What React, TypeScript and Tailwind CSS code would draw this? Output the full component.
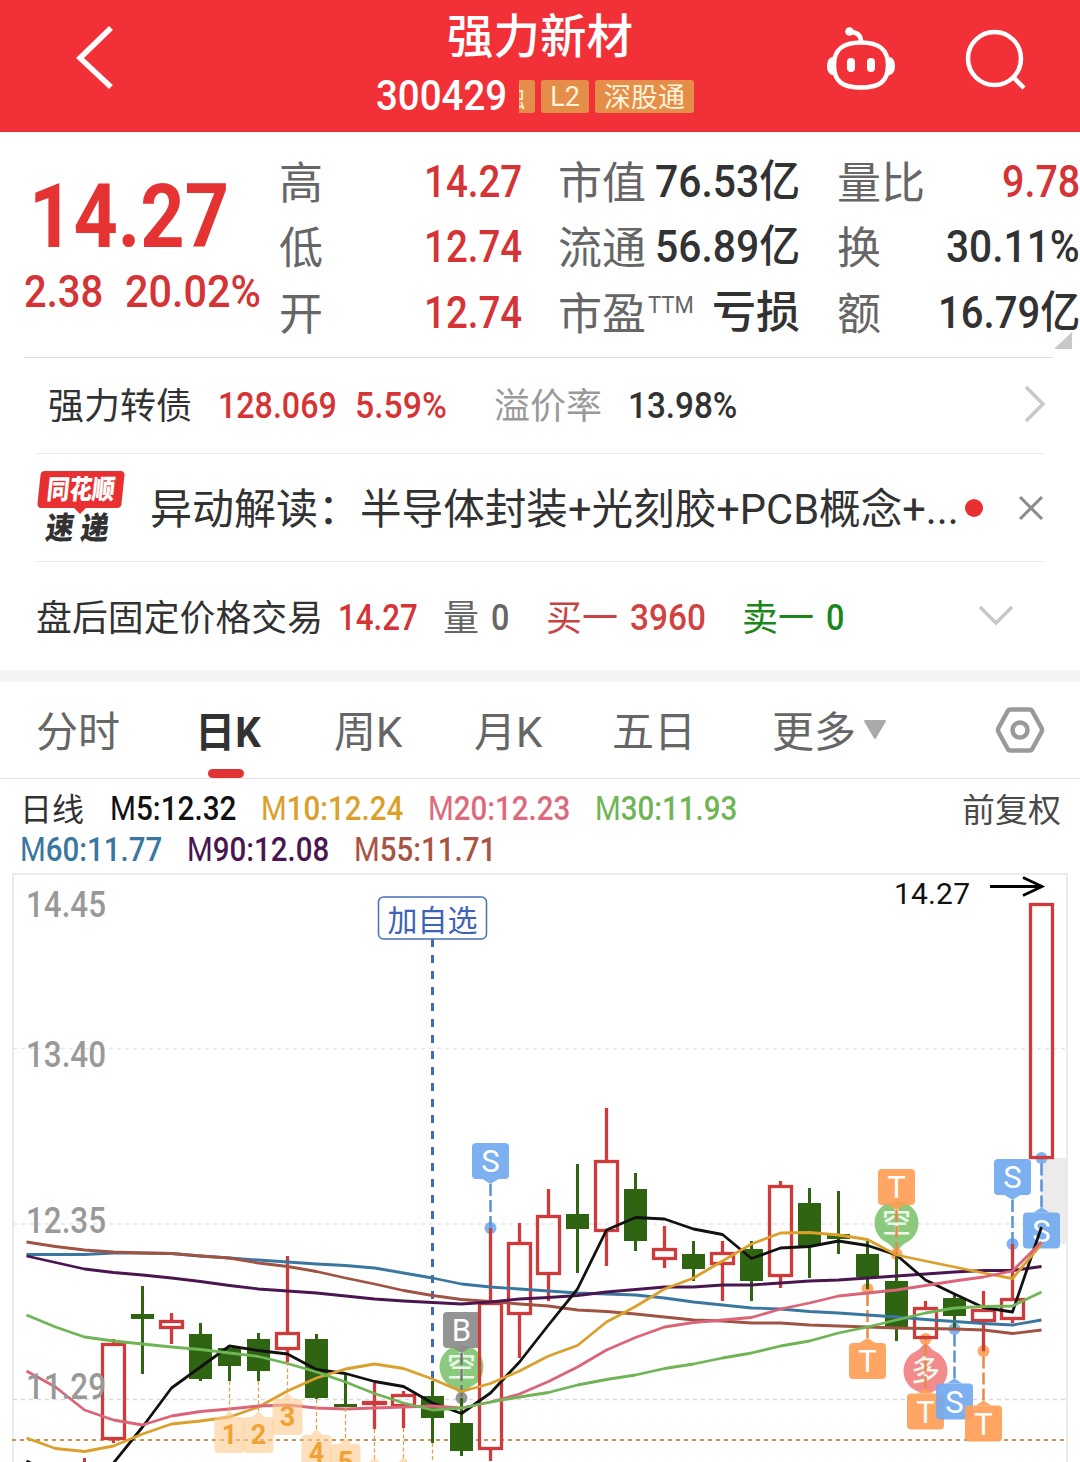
import { useLayoutEffect, useRef, useState, type ReactNode } from 'react';

type FitProps = { w: number; className?: string; children: ReactNode };

// Condenses a run of text horizontally so that it fills exactly w pixels
function Fit({ w, className = '', children }: FitProps) {
  const ref = useRef<HTMLSpanElement>(null);
  const [scale, setScale] = useState(1);

  useLayoutEffect(() => {
    if (ref.current) setScale(w / ref.current.offsetWidth);
  }, [w]);

  return (
    <span className={`inline-block shrink-0 whitespace-nowrap ${className}`} style={{ width: w }}>
      <span ref={ref} className="inline-block origin-left" style={{ transform: `scaleX(${scale})` }}>
        {children}
      </span>
    </span>
  );
}

function Header() {
  return (
    <header className="flex h-[132px] border-b border-[#d8303c] bg-[#f23038] text-white">
      <div className="w-[375px] pl-[76px] pt-[25px]">
        <svg width="38" height="66" viewBox="0 0 38 66" fill="none" stroke="#fff" strokeWidth="5.5">
          <path d="M35 3 L4 33 L35 62" />
        </svg>
      </div>
      <div className="flex w-[330px] flex-col">
        <h1 className="mt-[6px] text-center text-[46.5px] leading-[62px] font-medium">强力新材</h1>
        <div className="mt-[8px] flex h-[40px] items-center">
          <Fit w={131} className="ml-[1px] text-[42px] leading-[42px] font-medium">300429</Fit>
          <div className="ml-[12px] flex h-[33px] w-[16px] justify-end overflow-hidden rounded-r-[3px] bg-[#e58e49] pr-[10px] text-[26px] leading-[36px] text-[#fff3d8]">
            融
          </div>
          <div className="ml-[6px] h-[33px] w-[48px] rounded-[3px] bg-[#e58e49] text-center text-[27px] leading-[34px] text-[#fff3d8]">
            L2
          </div>
          <div className="ml-[6px] h-[33px] w-[99px] rounded-[3px] bg-[#e58e49] text-center text-[27px] leading-[36px] text-[#fff3d8]">
            深股通
          </div>
        </div>
      </div>
      <div className="flex pt-[26px] pl-[121px]">
        <svg width="70" height="66" viewBox="826 26 70 66" fill="none" stroke="#fff" strokeWidth="4.5">
          <path d="M861 42.500 C879 42.500 888 49 888 65 C888 82 879 87.500 861 87.500 C843 87.500 834 82 834 65 C834 49 843 42.500 861 42.500 Z" />
          <path d="M861 42 C861 35 857 32 850 32" />
          <circle cx="849.500" cy="31.500" r="4.300" fill="#fff" stroke="none" />
          <path d="M833 57.500 C826 59 826 73 833 74.500 Z M889 57.500 C896 59 896 73 889 74.500 Z" fill="#fff" strokeWidth="1.500" />
          <rect x="847" y="58" width="8" height="14" rx="4" fill="#fff" stroke="none" />
          <rect x="867" y="58" width="8" height="14" rx="4" fill="#fff" stroke="none" />
        </svg>
        <svg className="ml-[69px]" width="62" height="66" viewBox="965 26 62 66" fill="none" stroke="#fff" strokeWidth="4.500">
          <circle cx="994.500" cy="58.500" r="26.500" />
          <path d="M1013 77 L1024 88" />
        </svg>
      </div>
    </header>
  );
}

type Cell = { label: string; value: string; w: number; color: string; sup?: string };

const columns: { className: string; cells: Cell[] }[] = [
  {
    className: 'w-[243px]',
    cells: [
      { label: '高', value: '14.27', w: 98, color: 'text-[#d53436]' },
      { label: '低', value: '12.74', w: 98, color: 'text-[#d53436]' },
      { label: '开', value: '12.74', w: 98, color: 'text-[#d53436]' },
    ],
  },
  {
    className: 'ml-[36px] w-[242px]',
    cells: [
      { label: '市值', value: '76.53亿', w: 145, color: 'text-[#323232]' },
      { label: '流通', value: '56.89亿', w: 145, color: 'text-[#323232]' },
      { label: '市盈', value: '亏损', w: 88, color: 'text-[#323232]', sup: 'TTM' },
    ],
  },
  {
    className: 'ml-[37px] w-[243px]',
    cells: [
      { label: '量比', value: '9.78', w: 78, color: 'text-[#d53436]' },
      { label: '换', value: '30.11%', w: 134, color: 'text-[#323232]' },
      { label: '额', value: '16.79亿', w: 142, color: 'text-[#323232]' },
    ],
  },
];

function Quote() {
  return (
    <section className="relative flex h-[225px]">
      <div className="w-[279px] text-[#e53232]">
        <Fit w={200} className="mt-[40px] ml-[29px] block text-[89px] leading-[90px] font-bold">14.27</Fit>
        <div className="mt-[3px] ml-[24px] flex text-[45px] leading-[54px] font-medium text-[#d53436]">
          <Fit w={79}>2.38</Fit>
          <Fit w={136} className="ml-[22px]">20.02%</Fit>
        </div>
      </div>
      {columns.map((col, i) => (
        <div key={i} className={`shrink-0 pt-[17px] ${col.className}`}>
          {col.cells.map((cell) => (
            <div key={cell.label} className="flex h-[65.5px] items-center justify-between text-[44px] leading-[60px]">
              <span className="flex pt-[4px] text-[#666]">
                {cell.label}
                {cell.sup && <Fit w={46} className="-mt-[10px] ml-[2px] text-[24px]">{cell.sup}</Fit>}
              </span>
              <Fit w={cell.w} className={`font-medium ${cell.color}`}>{cell.value}</Fit>
            </div>
          ))}
        </div>
      ))}
      <svg className="absolute top-[200px] left-[1054px]" width="18" height="17">
        <path d="M18 0 V17 H0 Z" fill="#c8c8c8" />
      </svg>
    </section>
  );
}

function BondRow() {
  return (
    <div className="mr-[27px] ml-[24px] flex h-[96px] items-center border-t border-[#dcdcdc] pl-[24px] text-[36px] leading-[50px]">
      <span className="w-[144px] pt-[3px] text-[#323232]">强力转债</span>
      <Fit w={119} className="ml-[26px] font-medium text-[#d53436]">128.069</Fit>
      <Fit w={92} className="ml-[18px] font-medium text-[#d53436]">5.59%</Fit>
      <span className="ml-[47px] pt-[3px] text-[#999]">溢价率</span>
      <Fit w={109} className="ml-[26px] font-medium text-[#323232]">13.98%</Fit>
      <svg className="mr-[7px] mb-[4px] ml-auto" width="22" height="38" fill="none" stroke="#c8c8c8" strokeWidth="3.500">
        <path d="M2 2 L19 19 L2 36" />
      </svg>
    </div>
  );
}

function NewsRow() {
  return (
    <div className="mx-[36px] flex h-[108px] border-t border-[#e9e9e9]">
      <div className="relative w-[90px] pt-[17px]">
        <div className="ml-[3px] h-[37px] w-[84px] -skew-x-6 rounded-[4px] bg-[#e83033] text-center">
          <Fit w={68} className="text-[27px] leading-[39px] font-black text-white">同花顺</Fit>
        </div>
        <svg className="absolute top-[53px] left-[37px]" width="14" height="8">
          <path d="M0 0 H14 L7 7 Z" fill="#e83033" />
        </svg>
        <div className="mt-[5px] ml-[10px] flex -skew-x-8 gap-[7px] text-[31px] leading-[32px] font-black text-[#323232]">
          <Fit w={28}>速</Fit>
          <Fit w={28}>递</Fit>
        </div>
      </div>
      <div className="ml-[25px] flex h-[107px] items-center text-[42px] text-[#323232]">
        <span className="w-[210px] pt-[4px]">异动解读：</span>
        <Fit w={599} className="pt-[4px]">半导体封装+光刻胶+PCB概念+...</Fit>
        <span className="ml-[6px] size-[18px] rounded-full bg-[#e83033]" />
        <svg className="ml-[35px]" width="26" height="26" stroke="#8c8c8c" strokeWidth="3">
          <path d="M2 2 L24 24 M24 2 L2 24" />
        </svg>
      </div>
    </div>
  );
}

function AfterHoursRow() {
  return (
    <div className="mx-[36px] flex h-[109px] items-center border-t border-[#e9e9e9] text-[36px] leading-[50px]">
      <Fit w={287} className="pt-[6px] text-[#323232]">盘后固定价格交易</Fit>
      <Fit w={80} className="ml-[15px] pt-[4px] font-medium text-[#d53436]">14.27</Fit>
      <span className="ml-[25px] pt-[6px] text-[#666]">量</span>
      <Fit w={18} className="ml-[12px] pt-[4px] font-medium text-[#666]">0</Fit>
      <span className="ml-[37px] pt-[6px] text-[#c94343]">买一</span>
      <Fit w={76} className="ml-[12px] pt-[4px] font-medium text-[#d04343]">3960</Fit>
      <span className="ml-[36px] pt-[6px] text-[#1c861c]">卖一</span>
      <Fit w={18} className="ml-[12px] pt-[4px] font-medium text-[#1c861c]">0</Fit>
      <svg className="ml-auto mr-[30px]" width="36" height="22" fill="none" stroke="#c8c8c8" strokeWidth="3.500">
        <path d="M2 2 L18 18 L34 2" />
      </svg>
    </div>
  );
}

function Tabs() {
  return (
    <nav className="flex h-[97px] items-center border-b border-[#e2e2e2] px-[36px] text-[42px] leading-[60px] text-[#666]">
      <Fit w={84} className="pt-[5px]">分时</Fit>
      <div className="relative ml-[75px] font-bold text-[#323232]">
        <Fit w={66} className="pt-[5px]">日K</Fit>
        <span className="absolute -bottom-[15px] left-[13px] h-[9px] w-[36px] rounded-full bg-[#e03434]" />
      </div>
      <Fit w={68} className="ml-[73px] pt-[5px]">周K</Fit>
      <Fit w={68} className="ml-[72px] pt-[5px]">月K</Fit>
      <Fit w={84} className="ml-[70px] pt-[5px]">五日</Fit>
      <Fit w={84} className="ml-[76px] pt-[5px]">更多</Fit>
      <svg className="ml-[7px]" width="24" height="20">
        <path d="M2 1 H22 L12 18 Z" fill="#a9a9a9" stroke="#a9a9a9" strokeWidth="2" strokeLinejoin="round" />
      </svg>
      <svg className="-mr-px ml-auto" width="50" height="48" viewBox="0 0 50 48" fill="none" stroke="#999" strokeWidth="4.500" strokeLinejoin="round">
        <path d="M15.500 3.500 H34.500 Q36.500 3.500 37.500 5.500 L46.500 22 Q47.500 24 46.500 26 L37.500 42.500 Q36.500 44.500 34.500 44.500 H15.500 Q13.500 44.500 12.500 42.500 L3.500 26 Q2.500 24 3.500 22 L12.500 5.500 Q13.500 3.500 15.500 3.500 Z" />
        <circle cx="25" cy="24" r="7.500" />
      </svg>
    </nav>
  );
}

function Average({ name, value, w, className }: { name: string; value: string; w: number; className: string }) {
  return (
    <Fit w={w} className={className}>
      {name.slice(0, 1)}
      <span className="font-medium">{name.slice(1)}:{value}</span>
    </Fit>
  );
}

function Legend() {
  return (
    <div className="h-[93px] pt-[9px] pr-[19px] pl-[20px] text-[33px] leading-[41px]">
      <div className="flex gap-[25px]">
        <span className="w-[65px] pt-[2px] text-[32px] text-[#323232]">日线</span>
        <Average name="M5" value="12.32" w={126} className="text-[#111]" />
        <Average name="M10" value="12.24" w={142} className="text-[#dba02c]" />
        <Average name="M20" value="12.23" w={142} className="text-[#dc6a7c]" />
        <Average name="M30" value="11.93" w={142} className="text-[#6fb556]" />
        <span className="ml-auto pt-[2px] text-[#4a4a4a]">前复权</span>
      </div>
      <div className="-mt-[2px] flex gap-[25px]">
        <Average name="M60" value="11.77" w={142} className="text-[#3a77a0]" />
        <Average name="M90" value="12.08" w={142} className="text-[#4a1650]" />
        <Average name="M55" value="11.71" w={142} className="text-[#a95443]" />
      </div>
    </div>
  );
}

const STEP = 29;
const cx = (i: number) => 113.5 + STEP * i;

// [up, high, low, body top, body bottom]
const candles: [boolean, number, number, number, number][] = [
  [true, 1339, 1443, 1343, 1440],
  [false, 1286, 1374, 1314, 1319],
  [true, 1313, 1344, 1320, 1329],
  [false, 1323, 1381, 1334, 1379],
  [false, 1348, 1381, 1348, 1366],
  [false, 1333, 1381, 1339, 1371],
  [true, 1256, 1362, 1332, 1350],
  [false, 1334, 1399, 1339, 1398],
  [false, 1375, 1407, 1404, 1407],
  [true, 1383, 1429, 1401, 1405],
  [true, 1391, 1428, 1394, 1407],
  [false, 1381, 1443, 1396, 1418],
  [false, 1398, 1456, 1423, 1451],
  [true, 1228, 1461, 1302, 1450],
  [true, 1223, 1358, 1242, 1315],
  [true, 1189, 1301, 1215, 1275],
  [false, 1164, 1273, 1214, 1229],
  [true, 1108, 1266, 1160, 1232],
  [false, 1173, 1251, 1189, 1241],
  [true, 1226, 1268, 1248, 1260],
  [false, 1241, 1281, 1254, 1269],
  [true, 1241, 1301, 1252, 1265],
  [false, 1241, 1301, 1249, 1281],
  [true, 1181, 1288, 1185, 1277],
  [false, 1188, 1278, 1203, 1246],
  [false, 1191, 1254, 1234, 1239],
  [false, 1241, 1289, 1254, 1277],
  [false, 1255, 1341, 1281, 1327],
  [true, 1301, 1339, 1307, 1339],
  [false, 1295, 1329, 1298, 1316],
  [true, 1291, 1351, 1309, 1322],
  [true, 1244, 1323, 1298, 1320],
  [true, 903, 1159, 903, 1159],
];

// Every series starts three bars left of the first full candle
const averages: { color: string; ys: number[] }[] = [
  {
    color: '#3a77a0',
    ys: [1254.5, 1254.5, 1254.5, 1253, 1253, 1253.5, 1256, 1258, 1260, 1262, 1264, 1265.5, 1268, 1273, 1278, 1284, 1287, 1289, 1291, 1293, 1294, 1295, 1298, 1302, 1305, 1308, 1309, 1311.5, 1313, 1315, 1317, 1319.5, 1321.5, 1323.5, 1325, 1320],
  },
  {
    color: '#a05243',
    ys: [1242, 1246.5, 1250, 1252, 1253, 1253.5, 1256, 1258, 1263, 1266.5, 1271.5, 1278, 1284, 1290.5, 1295.5, 1299.5, 1301.5, 1304, 1306, 1310, 1311.5, 1314, 1317, 1320, 1321, 1323, 1323, 1325, 1326, 1327, 1328, 1328.5, 1329, 1330, 1333.5, 1330],
  },
  {
    color: '#4a1650',
    ys: [1256, 1262.5, 1269, 1272.5, 1275, 1278, 1281.5, 1285.5, 1289, 1291, 1293, 1296, 1299, 1301, 1302.5, 1304, 1302, 1299, 1297.5, 1295.5, 1292, 1289.5, 1287, 1287, 1285, 1285, 1283, 1281, 1280, 1278, 1276, 1274, 1272, 1270.5, 1270.5, 1266.5],
  },
  {
    color: '#111',
    ys: [1461, 1475, 1485, 1463, 1427, 1388, 1367, 1346, 1350.5, 1354, 1369.5, 1373.5, 1381.5, 1386.5, 1403, 1413.5, 1393, 1362, 1325, 1289, 1230, 1217.5, 1219, 1229, 1234.5, 1258.5, 1248, 1246.5, 1241, 1245.5, 1255, 1280, 1294, 1307.5, 1312, 1227],
  },
  {
    color: '#dba02c',
    ys: [1438, 1448.5, 1451.5, 1446, 1434, 1424, 1421, 1417, 1407, 1391, 1378, 1369, 1364, 1368.5, 1379, 1391.5, 1383.5, 1371, 1356, 1345.5, 1322, 1306.5, 1289, 1278, 1261, 1244, 1233, 1232.5, 1235, 1239.5, 1255, 1261, 1267, 1273, 1278.5, 1244],
  },
  {
    color: '#dc6478',
    ys: [1371, 1387, 1410, 1420, 1425, 1416, 1411.5, 1409, 1406, 1405, 1408, 1409, 1408, 1407, 1406, 1408, 1402, 1394, 1381.5, 1367, 1350, 1337.5, 1327, 1322.5, 1320, 1317.5, 1309, 1303, 1296, 1293, 1290, 1285.5, 1281, 1277, 1271, 1242],
  },
  {
    color: '#6fb556',
    ys: [1315, 1327, 1337, 1341, 1344, 1347, 1349.5, 1353, 1356.5, 1363.5, 1372, 1382, 1393.5, 1403, 1410, 1408, 1402, 1397, 1392.5, 1385, 1379.5, 1375, 1368.5, 1364, 1358, 1353, 1346, 1341, 1333, 1327, 1320, 1313, 1308, 1306.5, 1306, 1292],
  },
];

// bar index, letter, box top, anchor dot
type Mark = { i: number; text: string; top: number; dot: number; fill: string; dark: string };

const BLUE = { fill: '#72aaf0', dark: '#5b93d8' };
const ORANGE = { fill: '#ff9f57', dark: '#e8894a' };
const GRAY = { fill: '#8c8c8c', dark: '#777' };

const marks: Mark[] = [
  { i: 12, text: 'B', top: 1312, dot: 1398, ...GRAY },
  { i: 13, text: 'S', top: 1143, dot: 1228, ...BLUE },
  { i: 26, text: 'T', top: 1343, dot: 1289, ...ORANGE },
  { i: 27, text: 'T', top: 1169, dot: 1254, ...ORANGE },
  { i: 28, text: 'T', top: 1393.5, dot: 1339, ...ORANGE },
  { i: 29, text: 'S', top: 1383.5, dot: 1329, ...BLUE },
  { i: 30, text: 'T', top: 1405.5, dot: 1351, ...ORANGE },
  { i: 31, text: 'S', top: 1159, dot: 1244, ...BLUE },
  { i: 32, text: 'S', top: 1212.5, dot: 1158, ...BLUE },
];

function MarkPin({ i, text, top, dot, fill, dark }: Mark) {
  const x = cx(i);
  const below = top > dot;
  const edge = below ? top : top + 36;
  const tip = below ? edge - 5 : edge + 5;
  return (
    <g>
      <circle cx={x} cy={dot} r="6" fill={fill} opacity="0.9" />
      <path d={`M${x} ${tip} V${dot}`} stroke={dark} strokeWidth="2.500" strokeDasharray="12 4" />
      <g opacity="0.92">
        <rect x={x - 18.5} y={top} width="37" height="36" rx="4" fill={fill} />
        <path d={`M${x - 8} ${edge} L${x} ${tip} L${x + 8} ${edge} Z`} fill={fill} />
      </g>
      <text x={x} y={top + 29} fontSize="31" textAnchor="middle" fill="#fff">{text}</text>
    </g>
  );
}

function Bubble({ i, y, text, fill, tail }: { i: number; y: number; text: string; fill: string; tail: number }) {
  const x = cx(i);
  return (
    <g opacity="0.9">
      <circle cx={x} cy={y} r="22" fill={fill} />
      <path
        d={`M${x - 16} ${y + tail * 15} Q${x - 4} ${y + tail * 22} ${x} ${y + tail * 30} Q${x + 4} ${y + tail * 22} ${x + 16} ${y + tail * 15} Z`}
        fill={fill}
      />
      <text x={x} y={y + 10} fontSize="29" fontWeight="500" textAnchor="middle" fill="#e9f5e6">{text}</text>
    </g>
  );
}

const counts = [
  { i: 4, from: 1381, top: 1413 },
  { i: 5, from: 1381, top: 1413 },
  { i: 6, from: 1362, top: 1395 },
  { i: 7, from: 1399, top: 1431 },
  { i: 8, from: 1408, top: 1440 },
  { i: 9, from: 1429, top: 1459 },
  { i: 10, from: 1428, top: 1459 },
  { i: 11, from: 1443, top: 1475 },
];

const priceLabels = [
  { text: '14.45', y: 916.5 },
  { text: '13.40', y: 1066.5 },
  { text: '12.35', y: 1232.5 },
  { text: '11.29', y: 1399 },
];

function Chart() {
  return (
    <svg className="block" width="1080" height="590" viewBox="0 872 1080 590" fill="none">
      <path d="M13 1470 V874 H1067 V1470" stroke="#ebebeb" strokeWidth="2" />
      <path d="M13 1048.500 H1067 M13 1224 H1067" stroke="#e6e6e6" strokeWidth="1.500" strokeDasharray="4 4" />
      <path d="M13 1399.500 H1067" stroke="#d9d9d9" strokeWidth="1.500" strokeDasharray="4 4" />
      <rect x="1041" y="1158" width="27" height="86" fill="#ebebeb" />
      <path d="M12 1440 H1067" stroke="#cc9352" strokeWidth="2" strokeDasharray="4 4" />

      <path d="M432.500 939 V1381" stroke="#3f6abc" strokeWidth="3" strokeDasharray="8 8" />
      <rect x="378.500" y="897" width="108" height="42" rx="5" fill="#fff" stroke="#4672b8" strokeWidth="1.500" />
      <text x="432.500" y="930.500" fontSize="30" textAnchor="middle" fill="#3f62b8">加自选</text>

      <Bubble i={12} y={1367} text="空" fill="#7fc470" tail={1} />
      <Bubble i={27} y={1223} text="空" fill="#7fc470" tail={1} />
      <Bubble i={28} y={1371} text="多" fill="#f27f80" tail={-1} />
      {marks.map((mark) => (
        <MarkPin key={mark.i} {...mark} />
      ))}

      <path d="M84.500 1458 V1470" stroke="#cc3e3e" strokeWidth="3" />
      {candles.map(([up, high, low, top, bottom], i) => {
        const x = cx(i);
        if (!up) {
          return (
            <g key={i} fill="#2f6413">
              <rect x={x - 1.5} y={high} width="3" height={low - high} />
              <rect x={x - 11.5} y={top} width="23" height={bottom - top} />
            </g>
          );
        }
        const solid = bottom - top < 6;
        return (
          <g key={i} stroke="#cf3a3a" strokeWidth="3.300">
            <path d={`M${x} ${high} V${top} M${x} ${bottom} V${low}`} />
            <rect x={x - 11} y={top + 1.5} width="22" height={solid ? 1 : bottom - top - 3} />
          </g>
        );
      })}

      {averages.map(({ color, ys }) => (
        <polyline
          key={color}
          points={ys.map((y, i) => `${cx(i - 3)},${y}`).join(' ')}
          stroke={color}
          strokeWidth="2.800"
          strokeLinejoin="round"
        />
      ))}

      {counts.map(({ i, from, top }, n) => {
        const x = cx(i);
        return (
          <g key={i}>
            <path d={`M${x} ${from} V${top}`} stroke="#dda552" strokeWidth="1.300" strokeDasharray="4 2.500" />
            <path
              d={`M${x} ${top - 2} L${x + 6} ${top + 4} H${x + 11} Q${x + 15} ${top + 4} ${x + 15} ${top + 8} V${top + 36} Q${x + 15} ${top + 40} ${x + 11} ${top + 40} H${x - 11} Q${x - 15} ${top + 40} ${x - 15} ${top + 36} V${top + 8} Q${x - 15} ${top + 4} ${x - 11} ${top + 4} H${x - 6} Z`}
              fill="#fdc98e"
              opacity="0.6"
            />
            {n < 5 && (
              <text x={x} y={top + 30.5} fontSize="27" fontWeight="700" textAnchor="middle" fill="#f0a233">{n + 1}</text>
            )}
          </g>
        );
      })}

      {priceLabels.map(({ text, y }) => (
        <text key={text} x="26" y={y} fontSize="36" fontWeight="500" textLength="80" lengthAdjust="spacingAndGlyphs" fill="#999">
          {text}
        </text>
      ))}
      <text x="894" y="904" fontSize="30" textLength="76" fill="#111">14.27</text>
      <path d="M990 886.500 H1041 M1023 877.500 L1042 886.500 L1023 895.500" stroke="#000" strokeWidth="2.800" />
    </svg>
  );
}

export default function App() {
  return (
    <div className="h-[1462px] w-[1080px] overflow-hidden bg-white font-[Roboto,'Noto_Sans_CJK_SC',sans-serif]">
      <Header />
      <Quote />
      <BondRow />
      <NewsRow />
      <AfterHoursRow />
      <div className="h-[12px] bg-[#f4f4f4]" />
      <Tabs />
      <Legend />
      <Chart />
    </div>
  );
}
